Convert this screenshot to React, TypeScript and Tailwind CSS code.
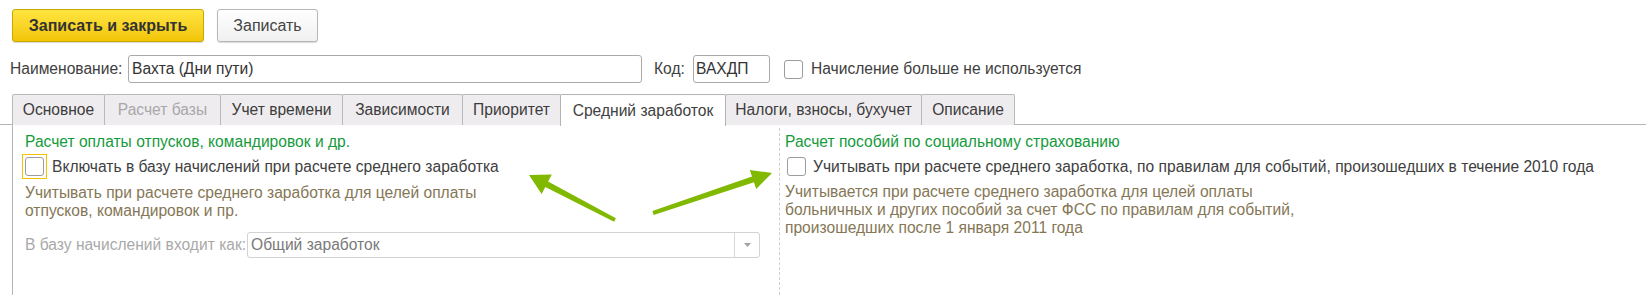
import React from 'react'

const tabs = [
  { label: 'Основное', w: 'w-[93px]' },
  { label: 'Расчет базы', w: 'w-[117px]', disabled: true },
  { label: 'Учет времени', w: 'w-[123px]' },
  { label: 'Зависимости', w: 'w-[121px]' },
  { label: 'Приоритет', w: 'w-[99px]' },
  { label: 'Средний заработок', w: 'w-[166px]', active: true },
  { label: 'Налоги, взносы, бухучет', w: 'w-[197px]' },
  { label: 'Описание', w: 'w-[94px]' },
]

function Checkbox({ focused }: { focused?: boolean }) {
  if (focused) {
    return (
      <div className="w-[25px] h-[25px] border border-[#f3c300] flex items-center justify-center shrink-0">
        <div className="w-[19px] h-[19px] border border-[#9c9c9c] rounded-[3px] bg-white" />
      </div>
    )
  }
  return <div className="w-[19px] h-[19px] border border-[#9c9c9c] rounded-[3px] bg-white shrink-0" />
}

export default function App() {
  return (
    <div
      className="relative w-[1646px] h-[295px] bg-white overflow-hidden text-[15.6px] text-[#404040]"
      style={{ fontFamily: '"Liberation Sans", Arial, sans-serif' }}
    >
      {/* кнопки */}
      <div className="flex gap-[13px] pl-[12px] pt-[9px] text-[16px]">
        <button className="w-[192px] h-[33px] rounded-[3px] border border-[#c9a800] bg-gradient-to-b from-[#ffe53d] to-[#f2c500] font-bold text-[#333] shadow-[0_1px_1px_rgba(0,0,0,0.15)]">
          Записать и закрыть
        </button>
        <button className="w-[101px] h-[33px] rounded-[3px] border border-[#b7b7b7] bg-gradient-to-b from-white to-[#f0f0f0] text-[#444] shadow-[0_1px_1px_rgba(0,0,0,0.15)]">
          Записать
        </button>
      </div>

      {/* наименование */}
      <div className="flex items-center pl-[10px] mt-[13px] h-[28px]">
        <span className="w-[118px]">Наименование:</span>
        <div className="w-[514px] h-[28px] border border-[#aaa] rounded-[3px] px-[3px] flex items-center text-[#333]">
          Вахта (Дни пути)
        </div>
        <span className="ml-[12px] w-[39px]">Код:</span>
        <div className="w-[77px] h-[28px] border border-[#aaa] rounded-[3px] px-[2px] flex items-center text-[#333]">
          ВАХДП
        </div>
        <div className="ml-[14px]">
          <Checkbox />
        </div>
        <span className="ml-[8px]">Начисление больше не используется</span>
      </div>

      {/* вкладки */}
      <div className="flex mt-[11px] pl-[12px] h-[31px] border-b border-[#b4b4b4]">
        {tabs.map((t) => (
          <div
            key={t.label}
            className={
              t.active
                ? `${t.w} h-[32px] -mr-px border border-b-0 border-[#b4b4b4] rounded-t-[2px] bg-white flex items-center justify-center relative z-10`
                : `${t.w} h-[31px] -mr-px border border-b-0 border-[#b9b9b9] rounded-t-[2px] bg-[#efecef] flex items-center justify-center ${t.disabled ? 'text-[#a8a8a8]' : 'text-[#3c3c3c]'}`
            }
          >
            {t.label}
          </div>
        ))}
      </div>

      {/* панель */}
      <div className="ml-[12px] border-l border-[#b4b4b4] h-[170px] flex">
        <div className="w-[766px] pl-[12px] pt-[8px]">
          <div className="text-[#159a3c] leading-[18px]">Расчет оплаты отпусков, командировок и др.</div>
          <div className="flex items-center mt-[3px] -ml-[3px] h-[25px]">
            <Checkbox focused />
            <span className="ml-[5px]">Включать в базу начислений при расчете среднего заработка</span>
          </div>
          <div className="mt-[5px] text-[#857756] leading-[18px]">
            Учитывать при расчете среднего заработка для целей оплаты
            <br />
            отпусков, командировок и пр.
          </div>
          <div className="flex items-center mt-[12px] h-[26px]">
            <span className="w-[222px] text-[#a9a9a9]">В базу начислений входит как:</span>
            <div className="w-[513px] h-[26px] border border-[#d3d3d3] rounded-[3px] flex items-center text-[#7a7a7a]">
              <span className="flex-1 pl-[3px]">Общий заработок</span>
              <div className="w-[25px] h-full border-l border-[#d8d8d8] flex items-center justify-center">
                <svg width="7" height="4" viewBox="0 0 7 4">
                  <path d="M0 0 H7 L3.5 4 Z" fill="#a2a2a2" />
                </svg>
              </div>
            </div>
          </div>
        </div>
        <div className="mt-[3px] border-l border-dashed border-[#cfcfcf] pl-[5px] pt-[5px] flex-1">
          <div className="text-[#159a3c] leading-[18px]">Расчет пособий по социальному страхованию</div>
          <div className="flex items-center mt-[3px] pl-[2px] h-[25px]">
            <Checkbox />
            <span className="ml-[7px]">
              Учитывать при расчете среднего заработка, по правилам для событий, произошедших в течение 2010 года
            </span>
          </div>
          <div className="mt-[4px] text-[#857756] leading-[18px]">
            Учитывается при расчете среднего заработка для целей оплаты
            <br />
            больничных и других пособий за счет ФСС по правилам для событий,
            <br />
            произошедших после 1 января 2011 года
          </div>
        </div>
      </div>

      {/* стрелки */}
      <svg className="absolute left-0 top-0 pointer-events-none" width="1646" height="295">
        <polygon
          points="529,175 551.8,174.6 548.1,181.6 615.9,218.2 614.1,221.8 545.3,187 541.6,194"
          fill="#80b900"
        />
        <polygon
          points="772,173 749.8,169.9 752,176.6 652.4,211.1 653.6,214.9 754,182.2 756.2,188.9"
          fill="#80b900"
        />
      </svg>
    </div>
  )
}
